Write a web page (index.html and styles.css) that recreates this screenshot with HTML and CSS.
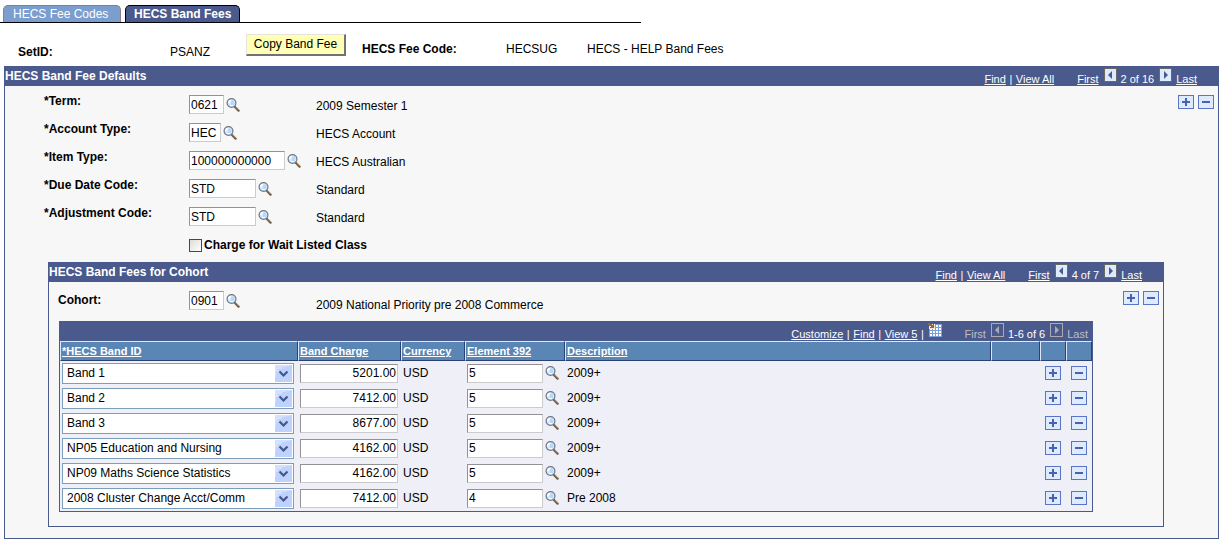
FILE: index.html
```html
<!DOCTYPE html>
<html lang="en">
<head>
  <meta charset="UTF-8">
  <meta name="viewport" content="width=device-width, initial-scale=1.0">
  <title>HECS Band Fees</title>
  <link rel="stylesheet" href="styles.css">
</head>
<body>
  <!-- shared icons -->
  <svg width="0" height="0" class="sprite" aria-hidden="true">
    <symbol id="lookup" viewBox="0 0 14 14">
      <path d="M8.5 8.5L12.6 12.6" stroke="#6b5a48" stroke-width="2.2" stroke-linecap="round"/>
      <path d="M9.5 8.7L12.8 12" stroke="#c39a5c" stroke-width="1"/>
      <circle cx="5.5" cy="5" r="4.4" fill="#cfe8ff" stroke="#6f7783" stroke-width="1.2"/>
      <path d="M5 2.5h3v4.5h-3z" fill="#b4d9fb"/>
      <path d="M2.8 5.2A2.6 2.6 0 0 1 5.2 2.6" stroke="#fff" stroke-width="1.5" fill="none"/>
      <path d="M4 7.5h3" stroke="#fff" stroke-width="1"/>
    </symbol>
    <symbol id="plus" viewBox="0 0 14 12"><path d="M3 5h8v2H3zM6 2h2v8H6z" fill="#4a61ad"/></symbol>
    <symbol id="minus" viewBox="0 0 14 12"><path d="M3 5h8v2H3z" fill="#4a61ad"/></symbol>
    <symbol id="prev" viewBox="0 0 11 12"><path d="M7 2v8L3 6z" fill="currentColor"/></symbol>
    <symbol id="next" viewBox="0 0 11 12"><path d="M4 2v8l4-4z" fill="currentColor"/></symbol>
    <symbol id="arrow" viewBox="0 0 17 17">
      <path d="M0 0h17v17H0z" fill="#bed2fd"/>
      <path d="M0 0h15v1h-4v1H7v2H3v3H1v5H0z" fill="#d5e1fc"/>
      <path d="M4.5 6.5l4 4 4-4" stroke="#43578b" stroke-width="2.2" fill="none"/>
    </symbol>
    <symbol id="sheet" viewBox="0 0 14 14">
      <path d="M1 1h13v13H1z" fill="#7b9ede"/>
      <path d="M5 2h2v2H5zM8 2h2v2H8zM11 2h2v2h-2zM2 5h2v2H2zM5 5h2v2H5zM8 5h2v2H8zM11 5h2v2h-2zM2 8h2v2H2zM5 8h2v2H5zM8 8h2v2H8zM11 8h2v2h-2zM2 11h2v2H2zM5 11h2v2H5zM8 11h2v2H8zM11 11h2v2h-2z" fill="#fff"/>
      <path d="M1 1h6v5H1z" fill="#f7e7ce"/>
      <path d="M0 0h2v1h2v1h1V1h1v4H2V4h1V3H1V2H0z" fill="#8c6b4a"/>
    </symbol>
  </svg>

  <nav class="tabs">
    <a class="tab" href="#">HECS Fee Codes</a>
    <a class="tab active" href="#">HECS Band Fees</a>
  </nav>

  <div class="keys">
    <b class="setid">SetID:</b>
    <span class="setid-value">PSANZ</span>
    <button class="copy" type="button">Copy Band Fee</button>
    <b class="fee-label">HECS Fee Code:</b>
    <span class="fee-code">HECSUG</span>
    <span>HECS - HELP Band Fees</span>
  </div>

  <section class="panel outer">
    <header class="bar">
      <h2>HECS Band Fee Defaults</h2>
      <div class="nav">
        <a href="#">Find</a><span class="sep">|</span><a href="#">View All</a>
        <a class="first" href="#">First</a>
        <button class="page" type="button" aria-label="Previous"><svg><use href="#prev"/></svg></button>
        <span>2 of 16</span>
        <button class="page" type="button" aria-label="Next"><svg><use href="#next"/></svg></button>
        <a href="#">Last</a>
      </div>
    </header>
    <div class="content">
      <div class="fields">
        <div class="row">
          <label for="term">*Term:</label>
          <div class="entry"><input class="text w35" id="term" value="0621"><button class="look" type="button" aria-label="Look up term"><svg><use href="#lookup"/></svg></button></div>
          <span class="desc">2009 Semester 1</span>
        </div>
        <div class="row">
          <label for="account">*Account Type:</label>
          <div class="entry"><input class="text w32" id="account" value="HEC"><button class="look" type="button" aria-label="Look up account type"><svg><use href="#lookup"/></svg></button></div>
          <span class="desc">HECS Account</span>
        </div>
        <div class="row">
          <label for="item">*Item Type:</label>
          <div class="entry"><input class="text w96" id="item" value="100000000000"><button class="look" type="button" aria-label="Look up item type"><svg><use href="#lookup"/></svg></button></div>
          <span class="desc">HECS Australian</span>
        </div>
        <div class="row">
          <label for="due">*Due Date Code:</label>
          <div class="entry"><input class="text w67" id="due" value="STD"><button class="look" type="button" aria-label="Look up due date code"><svg><use href="#lookup"/></svg></button></div>
          <span class="desc">Standard</span>
        </div>
        <div class="row">
          <label for="adjust">*Adjustment Code:</label>
          <div class="entry"><input class="text w67" id="adjust" value="STD"><button class="look" type="button" aria-label="Look up adjustment code"><svg><use href="#lookup"/></svg></button></div>
          <span class="desc">Standard</span>
        </div>
        <div class="check">
          <input type="checkbox" id="wait"><label for="wait">Charge for Wait Listed Class</label>
        </div>
      </div>
      <div class="addrem">
        <button class="pm" type="button" aria-label="Add"><svg><use href="#plus"/></svg></button>
        <button class="pm" type="button" aria-label="Delete"><svg><use href="#minus"/></svg></button>
      </div>
    </div>

    <section class="panel inner">
      <header class="bar">
        <h2>HECS Band Fees for Cohort</h2>
        <div class="nav">
          <a href="#">Find</a><span class="sep">|</span><a href="#">View All</a>
          <a class="first" href="#">First</a>
          <button class="page" type="button" aria-label="Previous"><svg><use href="#prev"/></svg></button>
          <span>4 of 7</span>
          <button class="page" type="button" aria-label="Next"><svg><use href="#next"/></svg></button>
          <a href="#">Last</a>
        </div>
      </header>
      <div class="content">
        <div class="row cohort">
          <label for="cohort">Cohort:</label>
          <div class="entry"><input class="text w35" id="cohort" value="0901"><button class="look" type="button" aria-label="Look up cohort"><svg><use href="#lookup"/></svg></button></div>
          <span class="desc">2009 National Priority pre 2008 Commerce</span>
        </div>
        <div class="addrem">
          <button class="pm" type="button" aria-label="Add"><svg><use href="#plus"/></svg></button>
          <button class="pm" type="button" aria-label="Delete"><svg><use href="#minus"/></svg></button>
        </div>
      </div>

      <div class="grid">
        <div class="bar">
          <div class="nav">
            <a href="#">Customize</a><span class="sep">|</span><a href="#">Find</a><span class="sep">|</span><a href="#">View 5</a><span class="sep">|</span>
            <button class="sheet" type="button" aria-label="Download"><svg><use href="#sheet"/></svg></button>
            <span class="first off">First</span>
            <button class="page" type="button" aria-label="Previous" disabled><svg><use href="#prev"/></svg></button>
            <span>1-6 of 6</span>
            <button class="page" type="button" aria-label="Next" disabled><svg><use href="#next"/></svg></button>
            <span class="off">Last</span>
          </div>
        </div>
        <table>
          <colgroup>
            <col class="c-band"><col class="c-charge"><col class="c-cur"><col class="c-elem"><col><col class="c-gap"><col class="c-btn"><col class="c-btn">
          </colgroup>
          <thead>
            <tr>
              <th><a href="#">*HECS Band ID</a></th>
              <th><a href="#">Band Charge</a></th>
              <th><a href="#">Currency</a></th>
              <th><a href="#">Element 392</a></th>
              <th><a href="#">Description</a></th>
              <th></th><th></th><th></th>
            </tr>
          </thead>
          <tbody id="bands"></tbody>
        </table>
      </div>
    </section>
  </section>

  <script src="script.js"></script>
</body>
</html>
```
FILE: styles.css
```css
body { font-family: Arial, "Liberation Sans", sans-serif; font-size: 12px; line-height: 18px; color: #000; background: #fff; margin: 0; padding: 5px 4px 0; }
input, select, button { font: inherit; color: inherit; margin: 0; box-sizing: border-box; }
button { padding: 0; cursor: pointer; }
svg { display: block; }
.sprite { position: absolute; }

/* tabs */
.tabs { display: flex; gap: 4px; width: 638px; max-width: 100%; margin-left: -4px; padding-left: 3px; border-bottom: 1px solid #000; }
.tab { height: 17px; padding: 0 9px; min-width: 98px; border: 1px solid #848284; border-bottom: 0; border-radius: 5px 5px 0 0; background: #7b9ece; color: #fff; text-decoration: none; line-height: 17px; box-sizing: content-box; height: 16px; }
.tab.active { padding: 0 8px; min-width: 95px; background: #4a5a8c; border-color: #000; font-weight: bold; }

/* key fields above the page */
.keys { display: flex; align-items: center; height: 43px; padding: 4px 0 0 14px; box-sizing: border-box; }
.keys > * { padding-top: 10px; }
.keys .setid { width: 152px; }
.keys .setid-value { width: 76px; }
.keys .copy { width: 100px; height: 22px; padding: 0; margin: 0 16px 4px 0; background: #ffffb5; border: 1px solid; border-width: 1px 2px 2px 1px; border-color: #e7e3d6 #737173 #737173 #e7e3d6; }
.keys .fee-label, .keys .fee-code, .keys .fee-code + span { padding-top: 4px; }
.keys .fee-label { width: 144px; }
.keys .fee-code { width: 81px; }

/* panels */
.panel { background: #f7f7f7; border: 1px solid #4a5a8c; border-top: 0; }
.outer { padding-bottom: 11px; }
.inner { margin: 0 54px 0 43px; padding-bottom: 14px; }
.bar { display: flex; justify-content: space-between; height: 20px; background: #4a5a8c; color: #fff; }
.bar h2 { margin: 0; font-size: 12px; line-height: 21px; }
.nav { display: flex; font-size: 11px; line-height: 26px; padding-right: 21px; margin-left: auto; height: 20px; white-space: nowrap; }
.nav a { color: #fff; }
.nav .sep { width: 10px; text-align: center; }
.nav .first { margin-left: 23px; }
.nav .off { color: #bdbec6; }
.page { width: 13px; height: 14px; margin: 2px 4px 0 5px; background: #deebff; border: 1px solid #6b6963; color: #4a5a8c; }
.page svg { width: 11px; height: 12px; }
.page:disabled { background: none; border-color: #adaaad; color: #adaaad; cursor: default; }

/* form */
.content { display: flex; justify-content: space-between; padding: 6px 4px 0 39px; }
.row { display: grid; grid-template-columns: 145px 127px auto; height: 28px; align-items: start; }
.row label, .check label { font-weight: bold; }
.entry { display: flex; align-items: center; padding-top: 3px; }
.text { height: 19px; padding: 0 1px; background: #fff; border: 1px solid; border-color: #949294 #cecbce #cecbce #949294; }
.w32 { width: 32px; }
.w35 { width: 35px; }
.w67 { width: 67px; }
.w96 { width: 96px; }
.look { margin-left: 2px; border: 0; background: none; }
.look svg { width: 14px; height: 14px; }
.desc { padding-top: 5px; }
.check { display: flex; align-items: center; height: 26px; margin: 0 0 4px 145px; }
.check input { appearance: none; width: 13px; height: 13px; border: 1px solid #1c5180; background: linear-gradient(135deg, #dcdcd7, #fff); }
.check label { margin-left: 2px; }
.addrem { display: flex; gap: 4px; padding-top: 3px; }
.pm { display: block; width: 16px; height: 14px; border: 1px solid #5a75c6; background: #deebff; }
.pm svg { width: 14px; height: 12px; }
.inner .content { padding-left: 9px; }
.cohort { grid-template-columns: 131px 127px auto; height: 33px; }
.cohort label { padding-top: 3px; }
.cohort .desc { padding-top: 8px; }

/* band grid */
.grid { margin: 0 70px 0 10px; border: 1px solid #4a5a8c; border-top: 0; background: #efeff7; }
.grid .nav { padding-right: 4px; }
.sheet { width: 14px; height: 14px; margin-top: 2px; border: 0; background: none; }
.sheet svg { width: 14px; height: 14px; }
table { width: 100%; table-layout: fixed; border-collapse: separate; border-spacing: 0; }
.c-band { width: 238px; }
.c-charge { width: 103px; }
.c-cur { width: 64px; }
.c-elem { width: 100px; }
.c-gap { width: 49px; }
.c-btn { width: 26px; }
th { height: 18px; padding: 0 1px; text-align: left; font-size: 11px; line-height: 18px; background: #5a86b5; border: 1px solid; border-color: #dee7f7 #294173 #294173 #dee7f7; white-space: nowrap; }
th a { color: #fff; }
td { height: 24px; padding: 0 2px 1px; white-space: nowrap; }
td .text { display: block; }
.charge { width: 98px; text-align: right; }
.elem { width: 76px; }
.lookup { display: flex; align-items: center; }
td .pm { margin: 0 auto 0 3px; }
.pick { position: relative; width: 232px; }
.pick select { display: block; appearance: none; width: 100%; height: 21px; padding: 0 20px 0 4px; border: 1px solid #7b9ebd; border-radius: 0; background: #fff; }
.pick svg { position: absolute; right: 2px; top: 2px; width: 17px; height: 17px; pointer-events: none; }
```
FILE: script.js
```js
const bands = [
  ["Band 1", "5201.00", "5", "2009+"],
  ["Band 2", "7412.00", "5", "2009+"],
  ["Band 3", "8677.00", "5", "2009+"],
  ["NP05 Education and Nursing", "4162.00", "5", "2009+"],
  ["NP09 Maths Science Statistics", "4162.00", "5", "2009+"],
  ["2008 Cluster Change Acct/Comm", "7412.00", "4", "Pre 2008"]
];

document.getElementById("bands").innerHTML = bands.map(([name, charge, element, desc]) => `
  <tr>
    <td><div class="pick"><select aria-label="HECS Band ID"><option>${name}</option></select><svg><use href="#arrow"/></svg></div></td>
    <td><input class="text charge" aria-label="Band Charge" value="${charge}"></td>
    <td>USD</td>
    <td><div class="lookup"><input class="text elem" aria-label="Element 392" value="${element}"><button class="look" type="button" aria-label="Look up element"><svg><use href="#lookup"/></svg></button></div></td>
    <td>${desc}</td>
    <td></td>
    <td><button class="pm" type="button" aria-label="Add row"><svg><use href="#plus"/></svg></button></td>
    <td><button class="pm" type="button" aria-label="Delete row"><svg><use href="#minus"/></svg></button></td>
  </tr>`).join("");
```
